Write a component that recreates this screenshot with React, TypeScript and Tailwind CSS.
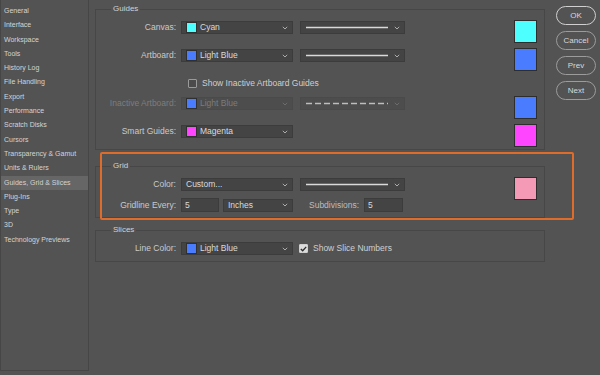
import React from "react";

const sidebarItems = [
  "General",
  "Interface",
  "Workspace",
  "Tools",
  "History Log",
  "File Handling",
  "Export",
  "Performance",
  "Scratch Disks",
  "Cursors",
  "Transparency & Gamut",
  "Units & Rulers",
  "Guides, Grid & Slices",
  "Plug-Ins",
  "Type",
  "3D",
  "Technology Previews",
];

function Chevron({ dim }: { dim?: boolean }) {
  return (
    <svg width="6" height="4" viewBox="0 0 6 4" className="ml-auto shrink-0">
      <path d="M0.8 0.8 L3 3 L5.2 0.8" fill="none" stroke={dim ? "#6f6f6f" : "#b8b8b8"} strokeWidth="0.9" />
    </svg>
  );
}

function ColorSelect({
  swatch,
  text,
  disabled,
  width = "w-[112px]",
}: {
  swatch?: string;
  text: string;
  disabled?: boolean;
  width?: string;
}) {
  return (
    <div
      className={`flex h-[13px] ${width} shrink-0 items-center border pl-[4px] pr-[4px] ${
        disabled ? "border-[#4a4a4a] bg-[#4d4d4d] text-[#7c7c7c]" : "border-[#3c3c3c] bg-[#444444] text-[#dadada]"
      }`}
    >
      {swatch && <span className={`mr-[3px] h-[11px] w-[11px] shrink-0 border border-[#303030] ${swatch}`} />}
      <span className="leading-[13px]">{text}</span>
      <Chevron dim={disabled} />
    </div>
  );
}

function LineSelect({ dashed, disabled }: { dashed?: boolean; disabled?: boolean }) {
  return (
    <div
      className={`ml-[7px] flex h-[13px] w-[105px] shrink-0 items-center border pl-[4px] pr-[4px] ${
        disabled ? "border-[#4a4a4a] bg-[#4d4d4d]" : "border-[#3c3c3c] bg-[#444444]"
      }`}
    >
      <svg width="84" height="3" viewBox="0 0 84 3">
        <line
          x1="1"
          y1="1.5"
          x2="83"
          y2="1.5"
          stroke={dashed ? "#bdbdbd" : "#d9d9d9"}
          strokeWidth="1.4"
          strokeDasharray={dashed ? "6 3" : undefined}
        />
      </svg>
      <Chevron dim={disabled} />
    </div>
  );
}

function BigSwatch({ color, className = "" }: { color: string; className?: string }) {
  return <div className={`ml-auto mr-[7px] h-[23px] w-[23px] shrink-0 border border-[#2e2e2e] ${color} ${className}`} />;
}

function Label({ children, dim }: { children: React.ReactNode; dim?: boolean }) {
  return (
    <div className={`w-[85px] shrink-0 pr-[5px] text-right leading-[13px] ${dim ? "text-[#7d7d7d]" : "text-[#cacaca]"}`}>
      {children}
    </div>
  );
}

function Checkbox({ checked }: { checked?: boolean }) {
  return (
    <span
      className={`flex h-[9px] w-[9px] shrink-0 items-center justify-center rounded-[1px] border ${
        checked ? "border-[#cfcfcf] bg-[#dcdcdc]" : "border-[#9a9a9a] bg-[#4b4b4b]"
      }`}
    >
      {checked && (
        <svg width="7" height="6" viewBox="0 0 7 6">
          <path d="M0.8 3 L2.7 4.8 L6.2 0.9" fill="none" stroke="#2c2c2c" strokeWidth="1.3" />
        </svg>
      )}
    </span>
  );
}

function Legend({ children }: { children: React.ReactNode }) {
  return <legend className="ml-[15px] px-[2px] text-[8px] leading-[10px] text-[#d2d2d2]">{children}</legend>;
}

export default function App() {
  return (
    <div className="relative flex h-[375px] w-[600px] overflow-hidden bg-[#535353] font-['Liberation_Sans',Arial,sans-serif] text-[8.5px]">
      {/* category list */}
      <div className="h-[371px] w-[89px] shrink-0 border-x border-b border-[#464646] pt-[4px] text-[7px] text-[#d3d3d3]">
        {sidebarItems.map((item) => (
          <div
            key={item}
            className={`h-[14.3px] pl-[3px] leading-[14.3px] ${item === "Guides, Grid & Slices" ? "bg-[#666666]" : ""}`}
          >
            {item}
          </div>
        ))}
      </div>

      {/* settings */}
      <div className="flex w-[456px] shrink-0 flex-col pl-[6px] pt-[4px]">
        <fieldset className="w-[450px] border border-[#474747] pb-[2px]">
          <Legend>Guides</Legend>
          <div className="mt-[6px] flex h-[23px] items-start">
            <div className="mt-[1px] flex">
              <Label>Canvas:</Label>
              <ColorSelect swatch="bg-[#4dffff]" text="Cyan" />
              <LineSelect />
            </div>
            <BigSwatch color="bg-[#4dffff]" />
          </div>
          <div className="mt-[5px] flex h-[23px] items-start">
            <div className="mt-[1px] flex">
              <Label>Artboard:</Label>
              <ColorSelect swatch="bg-[#4a7cff]" text="Light Blue" />
              <LineSelect />
            </div>
            <BigSwatch color="bg-[#4a7cff]" />
          </div>
          <div className="mt-[6px] flex h-[13px] items-center pl-[92px] text-[#cfcfcf]">
            <Checkbox />
            <span className="ml-[5px]">Show Inactive Artboard Guides</span>
          </div>
          <div className="mt-[6px] flex h-[23px] items-start">
            <div className="mt-[1px] flex">
              <Label dim>Inactive Artboard:</Label>
              <ColorSelect swatch="bg-[#4a7cff]" text="Light Blue" disabled />
              <LineSelect dashed disabled />
            </div>
            <BigSwatch color="bg-[#4a7cff]" />
          </div>
          <div className="mt-[5px] flex h-[23px] items-start">
            <div className="mt-[1px] flex">
              <Label>Smart Guides:</Label>
              <ColorSelect swatch="bg-[#ff45ff]" text="Magenta" />
            </div>
            <BigSwatch color="bg-[#ff45ff]" />
          </div>
        </fieldset>

        <fieldset className="mt-[11px] w-[450px] border border-[#474747] pb-[5px]">
          <Legend>Grid</Legend>
          <div className="flex items-start">
            <div className="flex flex-col">
              <div className="mt-[7px] flex">
                <Label>Color:</Label>
                <ColorSelect text="Custom..." />
                <LineSelect />
              </div>
              <div className="mt-[7px] flex h-[14px] items-center">
                <Label>Gridline Every:</Label>
                <div className="h-[14px] w-[38px] border border-[#3c3c3c] bg-[#444444] pl-[3px] leading-[12px] text-[#dadada]">5</div>
                <div className="ml-[4px]">
                  <ColorSelect text="Inches" width="w-[70px]" />
                </div>
                <span className="ml-[16px] text-[#bdbdbd]">Subdivisions:</span>
                <div className="ml-[5px] h-[14px] w-[39px] border border-[#3c3c3c] bg-[#444444] pl-[3px] leading-[12px] text-[#dadada]">5</div>
              </div>
            </div>
            <BigSwatch color="bg-[#f49ab6]" className="mt-[6px] h-[22px]" />
          </div>
        </fieldset>

        <fieldset className="mt-[7px] w-[450px] border border-[#474747] pb-[6px]">
          <Legend>Slices</Legend>
          <div className="mt-[7px] flex items-center">
            <Label>Line Color:</Label>
            <ColorSelect swatch="bg-[#4a7cff]" text="Light Blue" />
            <span className="ml-[6px]">
              <Checkbox checked />
            </span>
            <span className="ml-[5px] text-[#cfcfcf]">Show Slice Numbers</span>
          </div>
        </fieldset>
      </div>

      {/* dialog buttons */}
      <div className="ml-[11px] flex flex-col gap-[6px] pt-[6px]">
        {["OK", "Cancel", "Prev", "Next"].map((b) => (
          <button
            key={b}
            className={`h-[19px] w-[40px] rounded-full text-[8px] text-[#d8d8d8] ${
              b === "OK" ? "border-[1.5px] border-[#d0d0d0]" : "border border-[#9c9c9c]"
            }`}
          >
            {b}
          </button>
        ))}
      </div>

      {/* highlight around grid settings */}
      <div className="absolute left-[100px] top-[152px] h-[68px] w-[474px] rounded-[2px] border-2 border-[#e06c2c]" />
    </div>
  );
}
